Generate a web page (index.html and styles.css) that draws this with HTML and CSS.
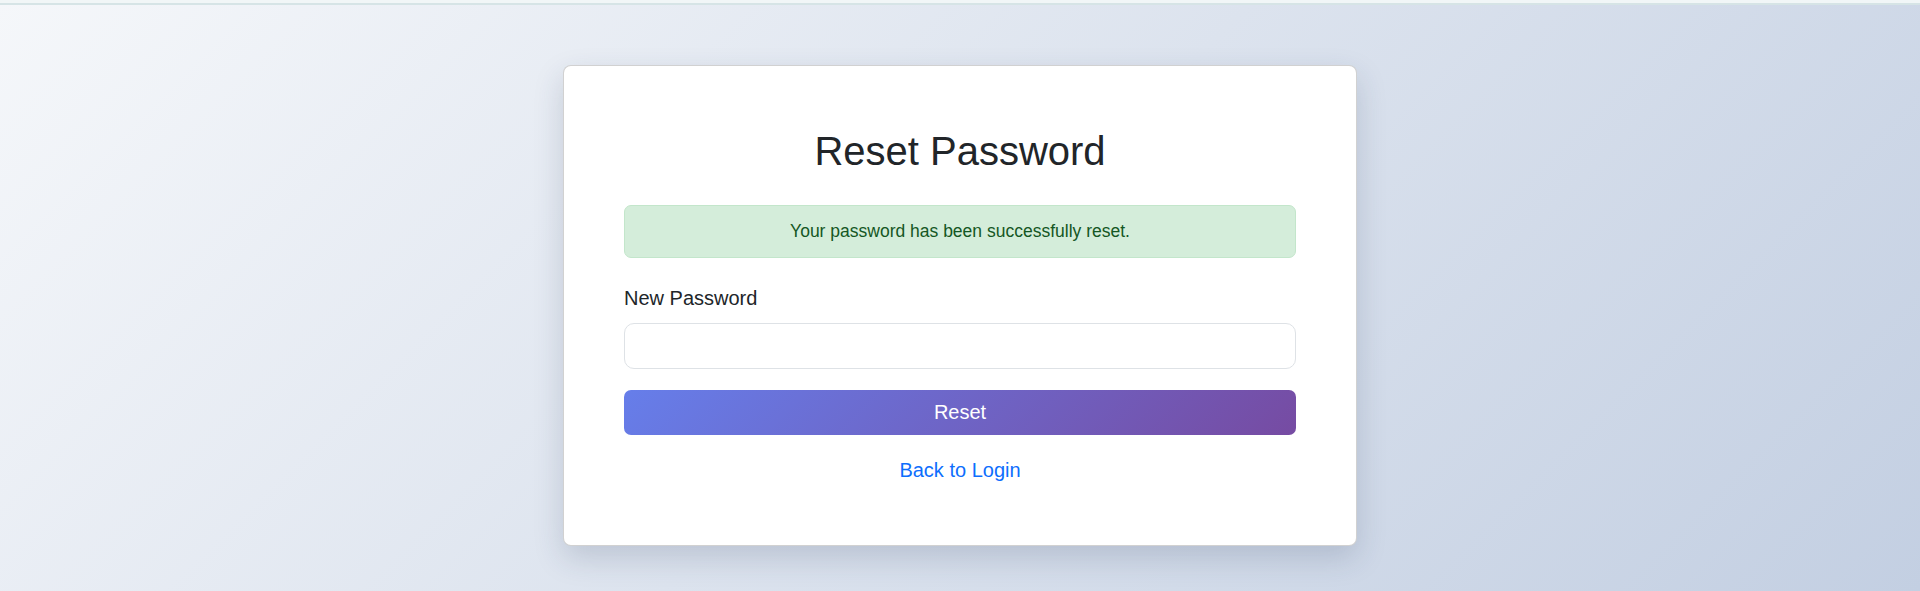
FILE: index.html
```html
<!DOCTYPE html>
<html lang="en">
<head>
<meta charset="utf-8">
<title>Reset Password</title>
<link rel="stylesheet" href="styles.css">
</head>
<body>
<div class="topbar"></div>
<main class="page">
  <div class="card">
    <h1 class="title">Reset Password</h1>
    <div class="alert">Your password has been successfully reset.</div>
    <form class="form">
      <label class="label" for="pw">New Password</label>
      <input class="input" id="pw" type="password">
      <button class="btn" type="button">Reset</button>
    </form>
    <div class="back"><a href="#" class="link">Back to Login</a></div>
  </div>
</main>
</body>
</html>
```

FILE: styles.css
```css
* { box-sizing: border-box; }
html, body { margin: 0; padding: 0; }
body {
  height: 591px;
  overflow: hidden;
  font-family: "Liberation Sans", Arial, sans-serif;
  color: #212529;
  background: linear-gradient(135deg, #f5f7fa 0%, #c3cfe2 100%);
  display: flex;
  flex-direction: column;
}
.topbar {
  height: 5px;
  flex: none;
  background: #f1f6f7;
  border-bottom: 2px solid #d6e4e6;
}
.page {
  flex: 1;
  display: flex;
  justify-content: center;
  align-items: flex-start;
  padding-top: 60px;
}
.card {
  width: 794px;
  background: #fff;
  border: 1px solid rgba(0,0,0,0.18);
  border-radius: 8px;
  padding: 61px 60px 60px;
  box-shadow: 0 12px 30px rgba(40, 55, 90, 0.18);
}
.title {
  margin: 0 0 30px;
  font-size: 40px;
  font-weight: 400;
  line-height: 48px;
  text-align: center;
}
.alert {
  height: 53px;
  display: flex;
  align-items: center;
  justify-content: center;
  background: #d4edda;
  border: 1px solid #c3e6cb;
  color: #155724;
  border-radius: 7px;
  font-size: 17.5px;
  margin-bottom: 25px;
}
.form { display: flex; flex-direction: column; }
.label {
  font-size: 20px;
  line-height: 30px;
  margin-bottom: 10px;
}
.input {
  height: 46px;
  border: 1px solid #dee2e6;
  border-radius: 10px;
  font-size: 20px;
  padding: 0 15px;
  margin: 0 0 21px;
  outline: none;
  background: #fff;
}
.btn {
  height: 45px;
  border: none;
  border-radius: 7px;
  color: #fff;
  font-family: inherit;
  font-size: 20px;
  background: linear-gradient(135deg, #667eea 0%, #764ba2 100%);
  margin: 0 0 20px;
  padding: 0;
}
.back {
  text-align: center;
  font-size: 20px;
  line-height: 30px;
}
.link { color: #0d6efd; text-decoration: none; }
```
